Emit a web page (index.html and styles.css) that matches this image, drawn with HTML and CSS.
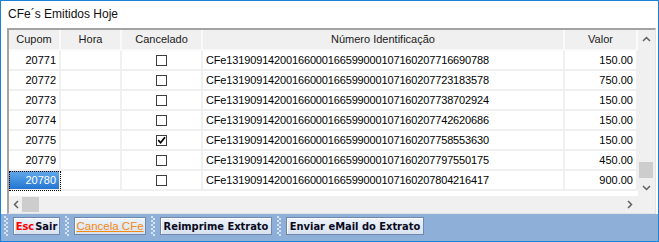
FILE: index.html
```html
<!DOCTYPE html>
<html lang="pt">
<head>
    <meta charset="UTF-8">
    <title>CFe´s Emitidos Hoje</title>
    <link rel="stylesheet" href="styles.css">
</head>
<body>
<div class="window">
    <div class="title">CFe´s Emitidos Hoje</div>

    <div class="grid">
        <div class="grid-main">
            <div class="cells">
                <div class="row head">
                    <div class="cell">Cupom</div>
                    <div class="cell">Hora</div>
                    <div class="cell">Cancelado</div>
                    <div class="cell">Número Identificação</div>
                    <div class="cell">Valor</div>
                </div>
                <div class="row">
                    <div class="cell num">20771</div>
                    <div class="cell"></div>
                    <div class="cell mid"><span class="chk"></span></div>
                    <div class="cell id">CFe13190914200166000166599000107160207716690788</div>
                    <div class="cell num">150.00</div>
                </div>
                <div class="row">
                    <div class="cell num">20772</div>
                    <div class="cell"></div>
                    <div class="cell mid"><span class="chk"></span></div>
                    <div class="cell id">CFe13190914200166000166599000107160207723183578</div>
                    <div class="cell num">750.00</div>
                </div>
                <div class="row">
                    <div class="cell num">20773</div>
                    <div class="cell"></div>
                    <div class="cell mid"><span class="chk"></span></div>
                    <div class="cell id">CFe13190914200166000166599000107160207738702924</div>
                    <div class="cell num">150.00</div>
                </div>
                <div class="row">
                    <div class="cell num">20774</div>
                    <div class="cell"></div>
                    <div class="cell mid"><span class="chk"></span></div>
                    <div class="cell id">CFe13190914200166000166599000107160207742620686</div>
                    <div class="cell num">150.00</div>
                </div>
                <div class="row">
                    <div class="cell num">20775</div>
                    <div class="cell"></div>
                    <div class="cell mid"><span class="chk"><svg width="9" height="9" viewBox="0 0 9 9"><path d="M1.2 4.2 L3.6 6.8 L8 1.2" stroke="#000" stroke-width="1.7" fill="none"/></svg></span></div>
                    <div class="cell id">CFe13190914200166000166599000107160207758553630</div>
                    <div class="cell num">150.00</div>
                </div>
                <div class="row">
                    <div class="cell num">20779</div>
                    <div class="cell"></div>
                    <div class="cell mid"><span class="chk"></span></div>
                    <div class="cell id">CFe13190914200166000166599000107160207797550175</div>
                    <div class="cell num">450.00</div>
                </div>
                <div class="row">
                    <div class="cell num sel">20780</div>
                    <div class="cell"></div>
                    <div class="cell mid"><span class="chk"></span></div>
                    <div class="cell id">CFe13190914200166000166599000107160207804216417</div>
                    <div class="cell num">900.00</div>
                </div>
            </div>

            <div class="vscroll">
                <div class="arrow v"><svg width="9" height="6" viewBox="0 0 9 6"><path d="M1 5 L4.5 1.5 L8 5" stroke="#606060" stroke-width="1.5" fill="none"/></svg></div>
                <div class="track"></div>
                <div class="vthumb"></div>
                <div class="arrow v"><svg width="9" height="6" viewBox="0 0 9 6"><path d="M1 1 L4.5 4.5 L8 1" stroke="#606060" stroke-width="1.5" fill="none"/></svg></div>
            </div>
        </div>

        <div class="hscroll">
            <div class="arrow h left"><svg width="6" height="9" viewBox="0 0 6 9"><path d="M5 1 L1.5 4.5 L5 8" stroke="#606060" stroke-width="1.5" fill="none"/></svg></div>
            <div class="hthumb"></div>
            <div class="track"></div>
            <div class="arrow h"><svg width="6" height="9" viewBox="0 0 6 9"><path d="M1 1 L4.5 4.5 L1 8" stroke="#606060" stroke-width="1.5" fill="none"/></svg></div>
            <div class="corner"></div>
        </div>
    </div>

    <div class="toolbar">
        <span class="grip"></span>
        <button type="button" class="btn w-sair"><span class="esc">Esc</span>Sair</button>
        <span class="grip"></span>
        <button type="button" class="btn link w-cancela">Cancela CFe</button>
        <span class="grip"></span>
        <button type="button" class="btn w-reimp">Reimprime Extrato</button>
        <span class="grip"></span>
        <button type="button" class="btn w-email">Enviar eMail do Extrato</button>
    </div>
</div>
</body>
</html>
```

FILE: styles.css
```css
body {
    margin: 0;
    font-family: "Liberation Sans", Arial, sans-serif;
    font-size: 11px;
    color: #000000;
    background-color: #ffffff;
}

.window {
    width: 659px;
    height: 242px;
    box-sizing: border-box;
    border: 1px solid #1883d7;
    display: flex;
    flex-direction: column;
}

.title {
    height: 27px;
    line-height: 27px;
    padding-left: 7px;
    font-size: 12px;
    color: #111111;
}

.grid {
    margin: 0 2px 0 6px;
    border-top: 2px solid #a3a3a3;
    border-left: 2px solid #a3a3a3;
    border-right: 1px solid #e3e3e3;
    border-bottom: 1px solid #e3e3e3;
}

.grid-main {
    display: flex;
    height: 166px;
}

.cells {
    flex: 1;
    overflow: hidden;
}

.row {
    display: grid;
    grid-template-columns: 52px 61px 81px 362px 73px;
}

.cell {
    height: 20px;
    line-height: 18px;
    box-sizing: border-box;
    padding: 0 3px;
    border-right: 2px solid #f0f0f0;
    border-bottom: 2px solid #f0f0f0;
    white-space: nowrap;
    overflow: hidden;
}

.head .cell {
    height: 21px;
    line-height: 19px;
    background-color: #f0f0f0;
    border-color: #fafafa;
    text-align: center;
    color: #1a1a1a;
}

.id {
    letter-spacing: -0.15px;
}

.num {
    text-align: right;
}

.mid {
    display: flex;
    align-items: center;
    justify-content: center;
}

.sel {
    background: linear-gradient(#63a9ea, #2476d2);
    color: #ffffff;
    outline: 1px dotted #000000;
    outline-offset: -1px;
}

.chk {
    width: 11px;
    height: 11px;
    box-sizing: border-box;
    border: 1px solid #3c3c3c;
    background-color: #ffffff;
    display: flex;
    align-items: center;
    justify-content: center;
}

.vscroll {
    width: 17px;
    background-color: #f0f0f0;
    display: flex;
    flex-direction: column;
}

.arrow {
    display: flex;
    align-items: center;
    justify-content: center;
}

.arrow.v {
    height: 17px;
}

.track {
    flex: 1;
}

.vthumb {
    height: 16px;
    width: 14px;
    margin: 0 0 1px 1px;
    background-color: #cdcdcd;
}

.hscroll {
    height: 17px;
    background-color: #f0f0f0;
    display: flex;
    align-items: center;
}

.arrow.h {
    width: 17px;
    height: 17px;
}

.arrow.left {
    width: 13px;
}

.hthumb {
    width: 17px;
    height: 15px;
    background-color: #cdcdcd;
}

.corner {
    width: 17px;
}

.toolbar {
    height: 27px;
    box-sizing: border-box;
    background-color: #8eb0d8;
    display: flex;
    align-items: flex-start;
    gap: 5px;
    padding: 3px 0 0 3px;
}

.grip {
    width: 4px;
    height: 20px;
    margin-top: -1px;
    background-image: linear-gradient(#d6e3f4 50%, transparent 50%), linear-gradient(#d6e3f4 50%, transparent 50%);
    background-size: 2px 4px, 2px 4px;
    background-position: 0 0, 2px 2px;
    background-repeat: repeat-y;
}

.btn {
    height: 18px;
    padding: 0;
    border: 1px solid #6f88ab;
    background: linear-gradient(#eef3fa, #d8e2ef);
    box-shadow: inset 1px 1px 0 #ffffff;
    font-family: "DejaVu Sans Condensed", "DejaVu Sans", sans-serif;
    font-size: 11px;
    font-weight: bold;
    color: #0a0a1e;
    line-height: 15px;
    text-align: center;
}

.btn.link {
    font-family: "Liberation Sans", Arial, sans-serif;
    font-size: 11.5px;
    font-weight: normal;
    color: #f58a12;
    text-decoration: underline;
}

.esc {
    color: #ff0000;
    margin-right: 1px;
}

.w-sair { width: 47px; }
.w-cancela { width: 72px; }
.w-reimp { width: 112px; }
.w-email { width: 138px; }
```
